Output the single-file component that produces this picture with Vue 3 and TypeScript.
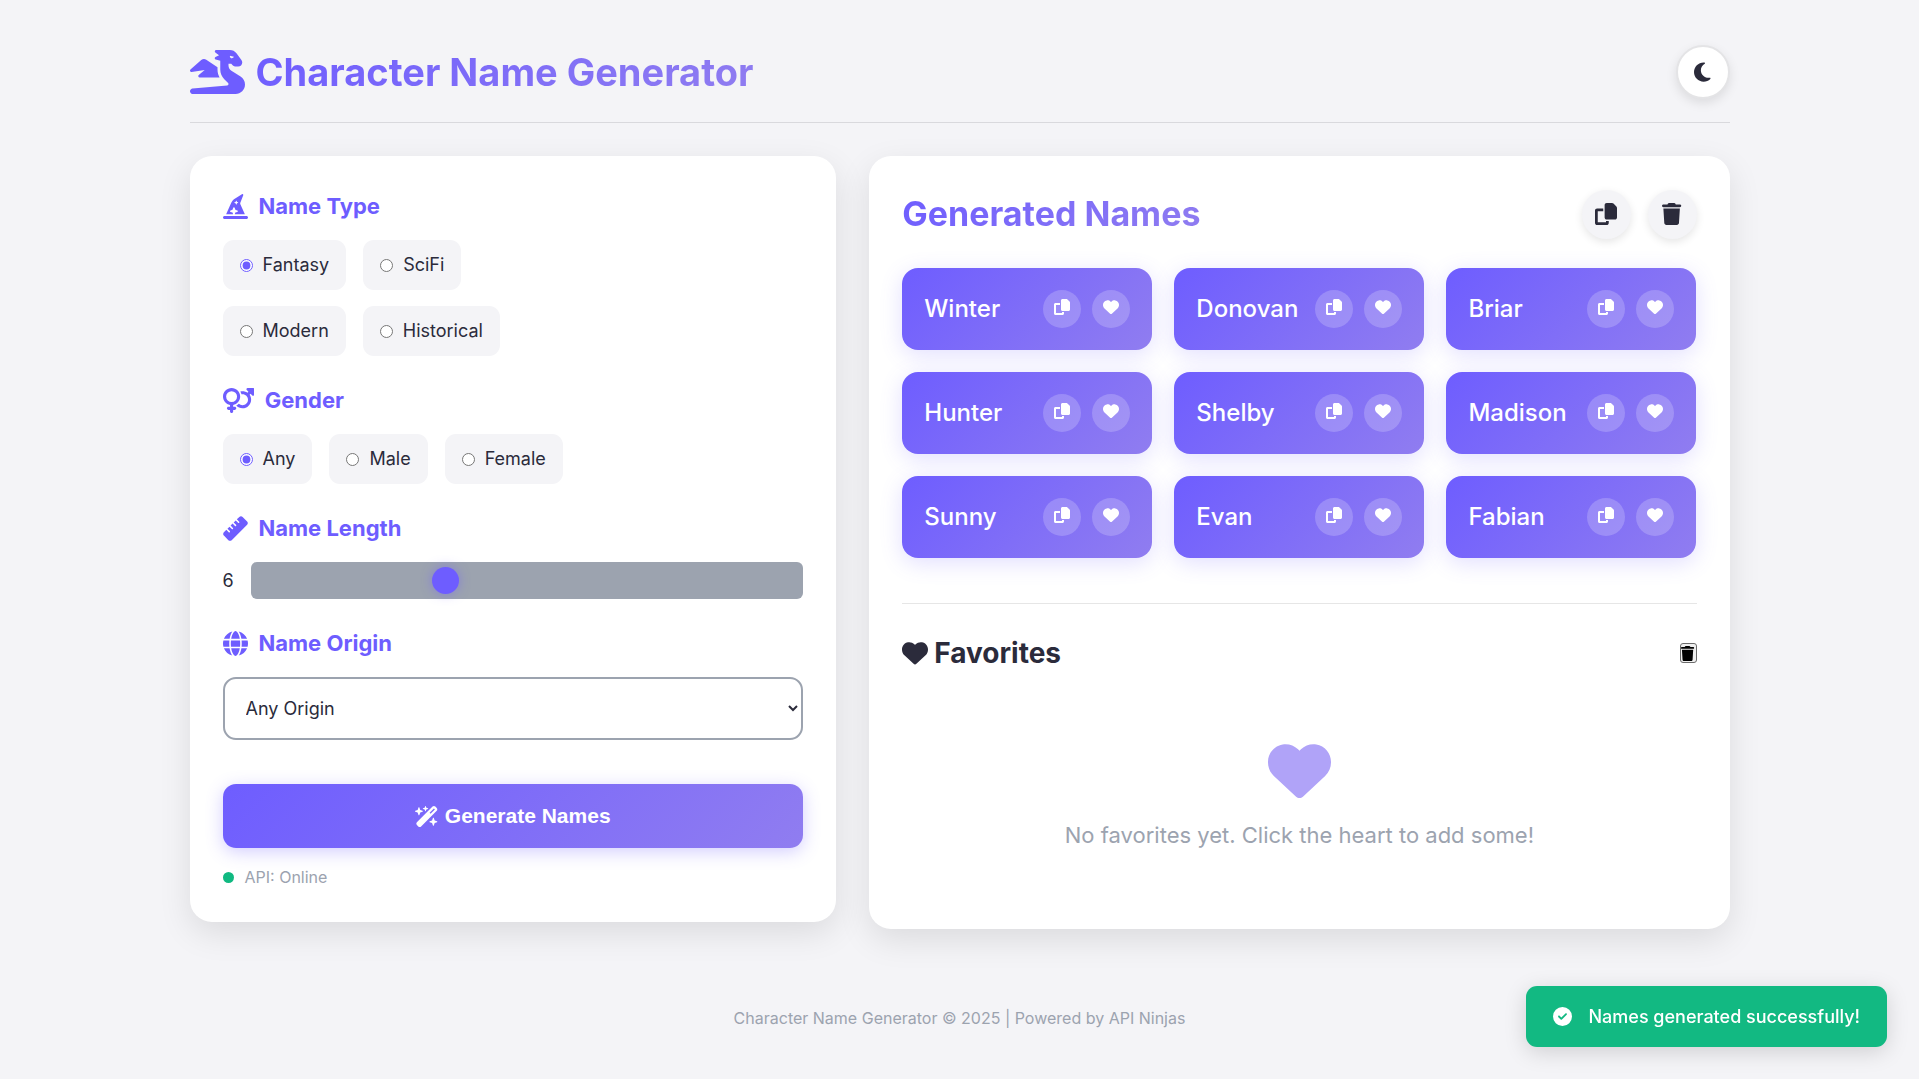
<script setup lang="ts">
import { ref } from 'vue'

interface Glyph {
  w: number
  d: string
}

const glyphs: Record<string, Glyph> = {
  dragon: {
    w: 640,
    d: 'M352 124.5l-51.9-13c-6.5-1.6-11.3-7.1-12-13.8s2.8-13.1 8.7-16.1l40.8-20.4L294.4 28.8c-5.5-4.1-7.8-11.3-5.6-17.9S297.1 0 304 0H416h32 16c30.2 0 58.7 14.2 76.8 38.4l57.6 76.8c6.2 8.3 9.6 18.4 9.6 28.8c0 26.5-21.5 48-48 48H538.5c-17 0-33.3-6.7-45.3-18.7L480 160H448v21.5c0 24.8 12.8 47.9 33.8 61.1l106.6 66.6c32.1 20.1 51.6 55.2 51.6 93.1C640 462.9 590.9 512 530.2 512H496 432 32.3c-3.3 0-6.6-.4-9.6-1.4C13.5 507.8 6 501 2.4 492.1C1 488.7 .2 485.2 0 481.4c-.2-3.7 .3-7.3 1.3-10.7c2.8-9.2 9.6-16.7 18.6-20.4c3-1.2 6.2-2 9.5-2.2L433.3 412c8.3-.7 14.7-7.7 14.7-16.1c0-4.3-1.7-8.4-4.7-11.4l-44.4-44.4c-30-30-46.9-70.7-46.9-113.1V181.5v-57zM512 72.3c0-.1 0-.2 0-.3s0-.2 0-.3v.6zm-1.3 7.4L464.3 68.1c-.2 1.3-.3 2.6-.3 3.9c0 13.3 10.7 24 24 24c10.6 0 19.5-6.8 22.7-16.3zM130.9 116.5c16.3-14.5 40.4-16.2 58.5-4.1l130.6 87V227c0 32.8 8.4 64.8 24 93H112c-6.7 0-12.7-4.2-15-10.4s-.5-13.3 4.6-17.7L171 232.3 18.4 255.8c-7 1.1-13.9-2.6-16.9-9s-1.5-14.1 3.8-18.8L130.9 116.5z',
  },
  moon: {
    w: 384,
    d: 'M223.5 32C100 32 0 132.3 0 256S100 480 223.5 480c60.6 0 115.5-24.2 155.8-63.4c5-4.9 6.3-12.5 3.1-18.7s-10.1-9.7-17-8.5c-9.8 1.7-19.8 2.6-30.1 2.6c-96.9 0-175.5-78.8-175.5-176c0-65.8 36-123.1 89.3-153.3c6.1-3.5 9.2-10.5 7.7-17.3s-7.3-11.9-14.3-12.5c-6.3-.5-12.6-.8-19-.8z',
  },
  hat: {
    w: 512,
    d: 'M64 416L168.6 180.7c15.3-34.4 40.3-63.5 72-83.7l146.9-94c3-1.9 6.5-2.9 10-2.9C407.7 0 416 8.3 416 18.6v1.6c0 2.6-.5 5.1-1.4 7.5L354.8 176.9c-1.9 4.7-2.8 9.7-2.8 14.7c0 5.5 1.2 11 3.4 16.1L448 416H240.9l11.8-35.4 40.4-13.5c6.5-2.2 10.9-8.3 10.9-15.2s-4.4-13-10.9-15.2l-40.4-13.5-13.5-40.4C237 276.4 230.9 272 224 272s-13 4.4-15.2 10.9l-13.5 40.4-40.4 13.5C148.4 339 144 345.1 144 352s4.4 13 10.9 15.2l40.4 13.5L207.1 416H64zM279.6 141.5c-1.1-3.3-4.1-5.5-7.6-5.5s-6.5 2.2-7.6 5.5l-6.7 20.2-20.2 6.7c-3.3 1.1-5.5 4.1-5.5 7.6s2.2 6.5 5.5 7.6l20.2 6.7 6.7 20.2c1.1 3.3 4.1 5.5 7.6 5.5s6.5-2.2 7.6-5.5l6.7-20.2 20.2-6.7c3.3-1.1 5.5-4.1 5.5-7.6s-2.2-6.5-5.5-7.6l-20.2-6.7-6.7-20.2zM32 448H480c17.7 0 32 14.3 32 32s-14.3 32-32 32H32c-17.7 0-32-14.3-32-32s14.3-32 32-32z',
  },
  venusMars: {
    w: 640,
    d: 'M176 288a112 112 0 1 0 0-224 112 112 0 1 0 0 224zM352 176c0 86.3-62.1 158.1-144 173.1V384h32c17.7 0 32 14.3 32 32s-14.3 32-32 32H208v32c0 17.7-14.3 32-32 32s-32-14.3-32-32V448H112c-17.7 0-32-14.3-32-32s14.3-32 32-32h32V349.1C62.1 334.1 0 262.3 0 176C0 78.8 78.8 0 176 0s176 78.8 176 176zM271.9 360.6c19.3-10.1 36.9-23.1 52.1-38.4c20 18.5 46.7 29.8 76.1 29.8c61.9 0 112-50.1 112-112s-50.1-112-112-112c-7.2 0-14.3 .7-21.1 2c-4.9-21.5-13-41.7-24-60.2C369.3 66 384.4 64 400 64c37 0 71.4 11.4 99.8 31l20.6-20.6L487 41c-6.9-6.9-8.9-17.2-5.2-26.2S494.3 0 504 0H616c13.3 0 24 10.7 24 24V136c0 9.7-5.8 18.5-14.8 22.2s-19.3 1.7-26.2-5.2l-33.4-33.4L545 140.2c19.5 28.4 31 62.7 31 99.8c0 97.2-78.8 176-176 176c-50.5 0-96-21.3-128.1-55.4z',
  },
  ruler: {
    w: 512,
    d: 'M177.9 494.1c-18.7 18.7-49.1 18.7-67.9 0L17.9 401.9c-18.7-18.7-18.7-49.1 0-67.9l50.7-50.7 48 48c6.2 6.2 16.4 6.2 22.6 0s6.2-16.4 0-22.6l-48-48 41.4-41.4 48 48c6.2 6.2 16.4 6.2 22.6 0s6.2-16.4 0-22.6l-48-48 41.4-41.4 48 48c6.2 6.2 16.4 6.2 22.6 0s6.2-16.4 0-22.6l-48-48 41.4-41.4 48 48c6.2 6.2 16.4 6.2 22.6 0s6.2-16.4 0-22.6l-48-48 50.7-50.7c18.7-18.7 49.1-18.7 67.9 0l92.1 92.1c18.7 18.7 18.7 49.1 0 67.9L177.9 494.1z',
  },
  globe: {
    w: 512,
    d: 'M352 256c0 22.2-1.2 43.6-3.3 64H163.3c-2.2-20.4-3.3-41.8-3.3-64s1.2-43.6 3.3-64H348.7c2.2 20.4 3.3 41.8 3.3 64zm28.8-64H503.9c5.3 20.5 8.1 41.9 8.1 64s-2.8 43.5-8.1 64H380.8c2.1-20.6 3.2-42 3.2-64s-1.1-43.4-3.2-64zm112.6-32H376.7c-10-63.9-29.8-117.4-55.3-151.6c78.3 20.7 142 77.5 171.9 151.6zm-149.1 0H167.7c6.1-36.4 15.5-68.6 27-94.7c10.5-23.6 22.2-40.7 33.5-51.5C239.4 3.2 248.7 0 256 0s16.6 3.2 27.8 13.8c11.3 10.8 23 27.9 33.5 51.5c11.6 26 20.9 58.2 27 94.7zm-209 0H18.6C48.6 85.9 112.2 29.1 190.6 8.4C165.1 42.6 145.3 96.1 135.3 160zM8.1 192H131.2c-2.1 20.6-3.2 42-3.2 64s1.1 43.4 3.2 64H8.1C2.8 299.5 0 278.1 0 256s2.8-43.5 8.1-64zM194.7 446.6c-11.6-26-20.9-58.2-27-94.6H344.3c-6.1 36.4-15.5 68.6-27 94.6c-10.5 23.6-22.2 40.7-33.5 51.5C272.6 508.8 263.3 512 256 512s-16.6-3.2-27.8-13.8c-11.3-10.8-23-27.9-33.5-51.5zM135.3 352c10 63.9 29.8 117.4 55.3 151.6C112.2 482.9 48.6 426.1 18.6 352H135.3zm358.1 0c-30 74.1-93.6 130.9-171.9 151.6c25.5-34.2 45.2-87.7 55.3-151.6H493.4z',
  },
  wand: {
    w: 576,
    d: 'M234.7 42.7L197 56.8c-3 1.1-5 4-5 7.2s2 6.1 5 7.2l37.7 14.1L248.8 123c1.1 3 4 5 7.2 5s6.1-2 7.2-5l14.1-37.7L315 71.2c3-1.1 5-4 5-7.2s-2-6.1-5-7.2L277.3 42.7 263.2 5c-1.1-3-4-5-7.2-5s-6.1 2-7.2 5L234.7 42.7zM46.1 395.4c-18.7 18.7-18.7 49.1 0 67.9l34.6 34.6c18.7 18.7 49.1 18.7 67.9 0L529.9 116.5c18.7-18.7 18.7-49.1 0-67.9L495.3 14.1c-18.7-18.7-49.1-18.7-67.9 0L46.1 395.4zM484.6 82.6l-105 105-23.3-23.3 105-105 23.3 23.3zM7.5 117.2C3 118.9 0 123.2 0 128s3 9.1 7.5 10.8L64 160l21.2 56.5c1.7 4.5 6 7.5 10.8 7.5s9.1-3 10.8-7.5L128 160l56.5-21.2c4.5-1.7 7.5-6 7.5-10.8s-3-9.1-7.5-10.8L128 96 106.8 39.5C105.1 35 100.8 32 96 32s-9.1 3-10.8 7.5L64 96 7.5 117.2zm352 256c-4.5 1.7-7.5 6-7.5 10.8s3 9.1 7.5 10.8L416 416l21.2 56.5c1.7 4.5 6 7.5 10.8 7.5s9.1-3 10.8-7.5L480 416l56.5-21.2c4.5-1.7 7.5-6 7.5-10.8s-3-9.1-7.5-10.8L480 352l-21.2-56.5c-1.7-4.5-6-7.5-10.8-7.5s-9.1 3-10.8 7.5L416 352l-56.5 21.2z',
  },
  copy: {
    w: 512,
    d: 'M272 0H396.1c12.7 0 24.9 5.1 33.9 14.1l67.9 67.9c9 9 14.1 21.2 14.1 33.9V336c0 26.5-21.5 48-48 48H272c-26.5 0-48-21.5-48-48V48c0-26.5 21.5-48 48-48zM48 128H192v64H64V448H256V416h64v48c0 26.5-21.5 48-48 48H48c-26.5 0-48-21.5-48-48V176c0-26.5 21.5-48 48-48z',
  },
  trash: {
    w: 448,
    d: 'M135.2 17.7L128 32H32C14.3 32 0 46.3 0 64S14.3 96 32 96H416c17.7 0 32-14.3 32-32s-14.3-32-32-32H320l-7.2-14.3C307.4 6.8 296.3 0 284.2 0H163.8c-12.1 0-23.2 6.8-28.6 17.7zM416 128H32L53.2 467c1.6 25.3 22.6 45 47.9 45H346.9c25.3 0 46.3-19.7 47.9-45L416 128z',
  },
  heart: {
    w: 512,
    d: 'M47.6 300.4L228.3 469.1c7.5 7 17.4 10.9 27.7 10.9s20.2-3.9 27.7-10.9L464.4 300.4c30.4-28.3 47.6-68 47.6-109.5v-5.8c0-69.9-50.5-129.5-119.4-141C347 36.5 300.6 51.4 268 84L256 96 244 84c-32.6-32.6-79-47.5-124.6-39.9C50.5 55.6 0 115.2 0 185.1v5.8c0 41.5 17.2 81.2 47.6 109.5z',
  },
  check: {
    w: 512,
    d: 'M256 512A256 256 0 1 0 256 0a256 256 0 1 0 0 512zM369 209L241 337c-9.4 9.4-24.6 9.4-33.9 0l-64-64c-9.4-9.4-9.4-24.6 0-33.9s24.6-9.4 33.9 0l47 47L335 175c9.4-9.4 24.6-9.4 33.9 0s9.4 24.6 0 33.9z',
  },
}

const box = (name: string): string => `0 0 ${glyphs[name].w} 512`

const typeRows: string[][] = [
  ['Fantasy', 'SciFi'],
  ['Modern', 'Historical'],
]
const genders: string[] = ['Any', 'Male', 'Female']
const names: string[] = ['Winter', 'Donovan', 'Briar', 'Hunter', 'Shelby', 'Madison', 'Sunny', 'Evan', 'Fabian']

const nameType = ref('Fantasy')
const gender = ref('Any')
const length = ref(6)
const origin = ref('any')
</script>

<template>
  <div class="container">
    <header class="top">
      <h1 class="brand">
        <svg class="brand-icon" :viewBox="box('dragon')" aria-hidden="true"><path :d="glyphs.dragon.d" /></svg>
        <span class="gradient-text">Character Name Generator</span>
      </h1>
      <button class="theme" type="button" aria-label="Toggle theme">
        <svg class="icon-md" :viewBox="box('moon')" aria-hidden="true"><path :d="glyphs.moon.d" /></svg>
      </button>
    </header>

    <main class="layout">
      <form class="card controls" @submit.prevent>
        <section class="group" role="radiogroup" aria-labelledby="type-title">
          <h2 id="type-title" class="group-title">
            <svg class="group-icon" :viewBox="box('hat')" aria-hidden="true"><path :d="glyphs.hat.d" /></svg>
            Name Type
          </h2>
          <div class="option-rows">
            <div v-for="(row, i) in typeRows" :key="i" class="options">
              <label v-for="t in row" :key="t" class="option">
                <input v-model="nameType" type="radio" name="type" :value="t" />
                {{ t }}
              </label>
            </div>
          </div>
        </section>

        <section class="group" role="radiogroup" aria-labelledby="gender-title">
          <h2 id="gender-title" class="group-title">
            <svg class="group-icon" :viewBox="box('venusMars')" aria-hidden="true"><path :d="glyphs.venusMars.d" /></svg>
            Gender
          </h2>
          <div class="options">
            <label v-for="g in genders" :key="g" class="option">
              <input v-model="gender" type="radio" name="gender" :value="g" />
              {{ g }}
            </label>
          </div>
        </section>

        <section class="group">
          <h2 class="group-title">
            <svg class="group-icon" :viewBox="box('ruler')" aria-hidden="true"><path :d="glyphs.ruler.d" /></svg>
            <label for="length">Name Length</label>
          </h2>
          <div class="slider-row">
            <output for="length">{{ length }}</output>
            <input id="length" v-model.number="length" class="slider" type="range" min="3" max="12" />
          </div>
        </section>

        <section class="group">
          <h2 class="group-title">
            <svg class="group-icon" :viewBox="box('globe')" aria-hidden="true"><path :d="glyphs.globe.d" /></svg>
            <label for="origin">Name Origin</label>
          </h2>
          <select id="origin" v-model="origin" class="select">
            <option value="any">Any Origin</option>
          </select>
        </section>

        <button class="generate" type="submit">
          <svg class="generate-icon" :viewBox="box('wand')" aria-hidden="true"><path :d="glyphs.wand.d" /></svg>
          Generate Names
        </button>
        <p class="status"><span class="dot"></span>API: Online</p>
      </form>

      <section class="card results">
        <div class="results-head">
          <h2 class="results-title gradient-text">Generated Names</h2>
          <div class="tools">
            <button class="tool" type="button" aria-label="Copy all">
              <svg class="icon-md" :viewBox="box('copy')" aria-hidden="true"><path :d="glyphs.copy.d" /></svg>
            </button>
            <button class="tool" type="button" aria-label="Clear all">
              <svg class="icon-md" :viewBox="box('trash')" aria-hidden="true"><path :d="glyphs.trash.d" /></svg>
            </button>
          </div>
        </div>

        <ul class="names">
          <li v-for="n in names" :key="n" class="name">
            <span>{{ n }}</span>
            <span class="name-actions">
              <button class="mini" type="button" :aria-label="`Copy ${n}`">
                <svg class="icon-sm" :viewBox="box('copy')" aria-hidden="true"><path :d="glyphs.copy.d" /></svg>
              </button>
              <button class="mini" type="button" :aria-label="`Favorite ${n}`">
                <svg class="icon-sm" :viewBox="box('heart')" aria-hidden="true"><path :d="glyphs.heart.d" /></svg>
              </button>
            </span>
          </li>
        </ul>

        <section class="favorites">
          <div class="fav-head">
            <h3 class="fav-title">
              <svg class="fav-icon" :viewBox="box('heart')" aria-hidden="true"><path :d="glyphs.heart.d" /></svg>
              Favorites
            </h3>
            <button class="fav-clear" type="button" aria-label="Clear favorites">
              <svg class="fav-clear-icon" :viewBox="box('trash')" aria-hidden="true"><path :d="glyphs.trash.d" /></svg>
            </button>
          </div>
          <div class="empty">
            <svg class="empty-icon" :viewBox="box('heart')" aria-hidden="true"><path :d="glyphs.heart.d" /></svg>
            <p class="empty-text">No favorites yet. Click the heart to add some!</p>
          </div>
        </section>
      </section>
    </main>

    <footer class="footer">Character Name Generator © 2025 | Powered by API Ninjas</footer>

    <div class="toast" role="status">
      <svg class="toast-icon" :viewBox="box('check')" aria-hidden="true"><path :d="glyphs.check.d" /></svg>
      <span>Names generated successfully!</span>
    </div>
  </div>
</template>

<style>
body {
  background: #f4f4f7;
}
</style>

<style scoped>
.container {
  --primary: #6e5dff;
  --secondary: #907df0;
  --gradient: linear-gradient(135deg, var(--primary), var(--secondary));
  --dark: #2b2b3b;
  --gray: #9ca3af;
  max-width: 1540px;
  margin: 0 auto;
  padding: 45px 16px 33px;
  font-family: Inter, "Liberation Sans", sans-serif;
  font-size: 18px;
  line-height: 24px;
  color: var(--dark);
}
@media (min-width: 1600px) {
  .container {
    padding-left: 0;
    padding-right: 0;
  }
}
.container *,
.container *::before {
  box-sizing: border-box;
}
h1,
h2,
h3,
p,
ul {
  margin: 0;
  padding: 0;
}
svg {
  display: block;
  flex: none;
  width: auto;
  fill: currentColor;
}
button {
  padding: 0;
  border: none;
  color: inherit;
  cursor: pointer;
}
.gradient-text {
  background: var(--gradient);
  background-clip: text;
  -webkit-background-clip: text;
  color: transparent;
}
.icon-md {
  height: 22px;
}
.icon-sm {
  height: 16px;
}

.top {
  display: flex;
  align-items: center;
  justify-content: space-between;
  padding-bottom: 23px;
  border-bottom: 1px solid #d9d9dd;
  margin-bottom: 33px;
}
.brand {
  display: flex;
  align-items: center;
  gap: 11px;
  font-size: 38px;
  line-height: 54px;
  font-weight: 700;
}
.brand-icon {
  height: 44px;
  color: var(--primary);
}
.theme {
  display: grid;
  place-items: center;
  width: 54px;
  height: 54px;
  border: 2px solid #e4e4e6;
  border-radius: 50%;
  background: #fff;
  box-shadow: 0 4px 11px rgba(0, 0, 0, 0.1);
}

.layout {
  display: grid;
  grid-template-columns: 42% minmax(0, 1fr);
  gap: 33px;
  align-items: start;
}
.card {
  padding: 33px;
  border-radius: 22px;
  background: #fff;
  box-shadow: 0 11px 33px rgba(0, 0, 0, 0.1);
}
.group {
  margin-bottom: 27px;
}
.group-title {
  display: flex;
  align-items: center;
  gap: 11px;
  height: 34px;
  margin-bottom: 17px;
  font-size: 22px;
  font-weight: 700;
  color: var(--primary);
}
.group-icon {
  height: 25px;
}
.option-rows {
  display: grid;
  gap: 16px;
}
.options {
  display: flex;
  flex-wrap: wrap;
  gap: 17px;
}
.option {
  display: flex;
  align-items: center;
  gap: 10px;
  height: 50px;
  padding: 0 17px;
  border-radius: 11px;
  background: #f4f4f7;
}
.option input {
  width: 13px;
  height: 13px;
  margin: 0;
  accent-color: var(--primary);
}
.slider-row {
  display: flex;
  align-items: center;
  gap: 17px;
}
.slider {
  flex: 1;
  min-width: 0;
  height: 37px;
  margin: 0;
  padding: 0 17px;
  border-radius: 6px;
  background: var(--gray);
  -webkit-appearance: none;
  appearance: none;
}
.slider::-webkit-slider-thumb {
  -webkit-appearance: none;
  width: 27px;
  height: 27px;
  border-radius: 50%;
  background: var(--primary);
  box-shadow: 0 0 11px rgba(110, 93, 255, 0.5);
}
.select {
  display: block;
  width: 100%;
  height: 63px;
  padding: 0 17px;
  border: 2px solid var(--gray);
  border-radius: 13px;
  background: #fff;
  font: inherit;
  color: inherit;
}
.generate {
  display: flex;
  align-items: center;
  justify-content: center;
  gap: 6px;
  width: 100%;
  height: 64px;
  margin: 44px 0 17px;
  border-radius: 13px;
  background: var(--gradient);
  box-shadow: 0 4px 17px rgba(110, 93, 255, 0.3);
  font: 700 21px "Liberation Sans", Arial, sans-serif;
  color: #fff;
}
.generate-icon {
  height: 21px;
}
.status {
  display: flex;
  align-items: center;
  gap: 11px;
  font-size: 16px;
  color: var(--gray);
}
.dot {
  width: 11px;
  height: 11px;
  border-radius: 50%;
  background: #10b981;
}

.results-head {
  display: flex;
  align-items: center;
  justify-content: space-between;
  height: 50px;
  margin-bottom: 29px;
}
.results-title {
  font-size: 34px;
  line-height: 46px;
  font-weight: 700;
}
.tools {
  display: flex;
  gap: 17px;
}
.tool {
  display: grid;
  place-items: center;
  width: 49px;
  height: 49px;
  border-radius: 50%;
  background: #f4f4f7;
  box-shadow: 0 3px 9px rgba(0, 0, 0, 0.1);
}
.names {
  display: grid;
  grid-template-columns: repeat(3, 1fr);
  gap: 22px;
  list-style: none;
}
.name {
  display: flex;
  align-items: center;
  justify-content: space-between;
  height: 82px;
  padding: 0 22px;
  border-radius: 16px;
  background: var(--gradient);
  box-shadow: 0 5px 22px rgba(110, 93, 255, 0.2);
  font-size: 24px;
  font-weight: 500;
  color: #fff;
}
.name-actions {
  display: flex;
  gap: 11px;
}
.mini {
  display: grid;
  place-items: center;
  width: 38px;
  height: 38px;
  padding-bottom: 4px;
  border-radius: 50%;
  background: rgba(255, 255, 255, 0.2);
}

.favorites {
  margin-top: 45px;
  padding-top: 29px;
  border-top: 1px solid #e6e6e6;
}
.fav-head {
  display: flex;
  align-items: center;
  justify-content: space-between;
  height: 40px;
}
.fav-title {
  display: flex;
  align-items: center;
  gap: 6px;
  font-size: 28px;
  font-weight: 700;
}
.fav-icon {
  height: 26px;
}
.fav-clear {
  display: grid;
  place-items: center;
  width: 17px;
  height: 20px;
  border: 1px solid #6b6b6b;
  border-radius: 3px;
  background: #efefef;
  color: #000;
}
.fav-clear-icon {
  height: 15px;
}
.empty {
  display: flex;
  flex-direction: column;
  align-items: center;
  gap: 19px;
  padding: 66px 0 47px;
}
.empty-icon {
  height: 63px;
  color: #b0a3f8;
}
.empty-text {
  font-size: 22px;
  line-height: 28px;
  color: var(--gray);
}

.footer {
  margin-top: 77px;
  text-align: center;
  font-size: 16px;
  color: var(--gray);
}
.toast {
  position: fixed;
  right: 32px;
  bottom: 32px;
  display: flex;
  align-items: center;
  gap: 16px;
  height: 61px;
  padding: 0 27px;
  border-radius: 11px;
  background: #12b982;
  box-shadow: 0 5px 22px rgba(0, 0, 0, 0.15);
  font-weight: 500;
  color: #fff;
}
.toast-icon {
  height: 19px;
}
</style>
